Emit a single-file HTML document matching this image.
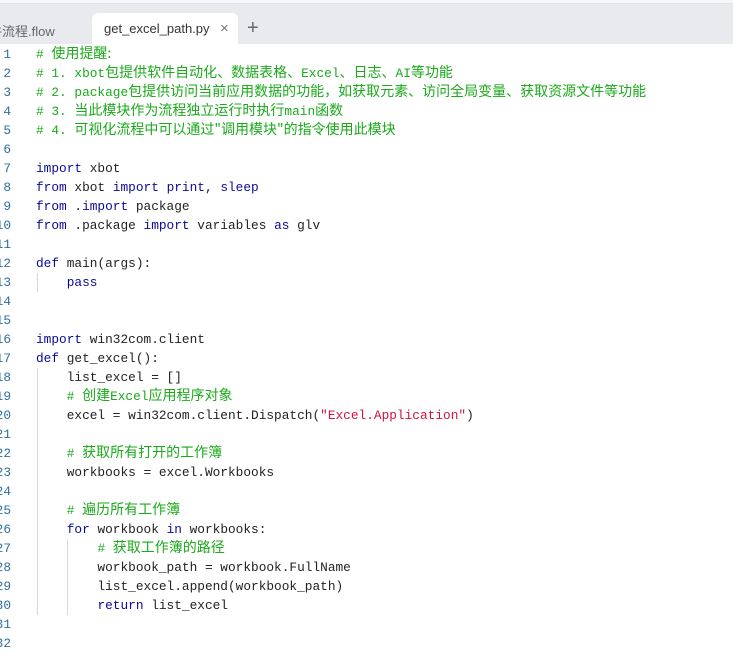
<!DOCTYPE html>
<html><head><meta charset="utf-8"><style>
*{margin:0;padding:0;box-sizing:border-box}
body{width:733px;height:665px;overflow:hidden;background:#fff;position:relative;font-family:"Liberation Mono","Noto Sans CJK SC",monospace}
.top{position:absolute;left:0;top:0;width:733px;height:4px;background:#f6f6f8;border-bottom:1px solid #e2e2e6}
.bar{position:absolute;left:0;top:4px;width:733px;height:40px;background:#e9eaee}
.t1{position:absolute;left:-24px;top:21px;font:13px "Liberation Sans","Noto Sans CJK SC",sans-serif;color:#666}
.tab{position:absolute;left:92px;top:13px;width:146px;height:31px;background:#fff;border-radius:6px 6px 0 0}
.tab span{position:absolute;left:12px;top:8px;font:13px "Liberation Sans","Noto Sans CJK SC",sans-serif;color:#333}
.x{position:absolute;left:220px;top:20px;font:15px "Liberation Sans",sans-serif;color:#777}
.plus{position:absolute;left:247px;top:17px;font:20px "Liberation Sans",sans-serif;color:#666}
.ln{position:absolute;left:-20px;width:31px;text-align:right;font-size:12.8px;color:#2e6fa3;line-height:19px}
.code{position:absolute;left:36px;top:45px;font-size:12.8px;line-height:19px;color:#222;white-space:pre;font-family:"Liberation Mono",monospace}
.code div{height:19px;overflow:visible}
.c{color:#1aaa1a}
.c i{font-style:normal;font-size:14px;font-family:"Noto Sans CJK SC",sans-serif;line-height:0}
.k{color:#0a0a9a}
.s{color:#d0143c}
.g{position:absolute;width:1px;background:#d8d8d8}
</style></head><body>
<div class="top"></div><div class="bar"></div>
<div class="t1">文件流程.flow</div>
<div class="tab"><span>get_excel_path.py</span></div>
<div class="x">×</div><div class="plus">+</div>
<div class="ln" style="top:45px">1<br>2<br>3<br>4<br>5<br>6<br>7<br>8<br>9<br>10<br>11<br>12<br>13<br>14<br>15<br>16<br>17<br>18<br>19<br>20<br>21<br>22<br>23<br>24<br>25<br>26<br>27<br>28<br>29<br>30<br>31<br>32</div>
<div class="g" style="left:37px;top:273px;height:19px"></div>
<div class="g" style="left:37px;top:368px;height:247px"></div>
<div class="g" style="left:67px;top:539px;height:76px"></div>
<div class="code"><div class="c"># <i>使用提醒:</i></div><div class="c"># 1. xbot<i>包提供软件自动化、数据表格、</i>Excel<i>、日志、</i>AI<i>等功能</i></div><div class="c"># 2. package<i>包提供访问当前应用数据的功能，如获取元素、访问全局变量、获取资源文件等功能</i></div><div class="c"># 3. <i>当此模块作为流程独立运行时执行</i>main<i>函数</i></div><div class="c"># 4. <i>可视化流程中可以通过"调用模块"的指令使用此模块</i></div><div></div><div><span class="k">import</span> xbot</div><div><span class="k">from</span> xbot <span class="k">import</span> <span class="k">print</span>, <span class="k">sleep</span></div><div><span class="k">from</span> .<span class="k">import</span> package</div><div><span class="k">from</span> .package <span class="k">import</span> variables <span class="k">as</span> glv</div><div></div><div><span class="k">def</span> main(args):</div><div>    <span class="k">pass</span></div><div></div><div></div><div><span class="k">import</span> win32com.client</div><div><span class="k">def</span> get_excel():</div><div>    list_excel = []</div><div>    <span class="c"># <i>创建</i>Excel<i>应用程序对象</i></span></div><div>    excel = win32com.client.Dispatch(<span class="s">"Excel.Application"</span>)</div><div></div><div>    <span class="c"># <i>获取所有打开的工作簿</i></span></div><div>    workbooks = excel.Workbooks</div><div></div><div>    <span class="c"># <i>遍历所有工作簿</i></span></div><div>    <span class="k">for</span> workbook <span class="k">in</span> workbooks:</div><div>        <span class="c"># <i>获取工作簿的路径</i></span></div><div>        workbook_path = workbook.FullName</div><div>        list_excel.append(workbook_path)</div><div>        <span class="k">return</span> list_excel</div></div>
</body></html>
